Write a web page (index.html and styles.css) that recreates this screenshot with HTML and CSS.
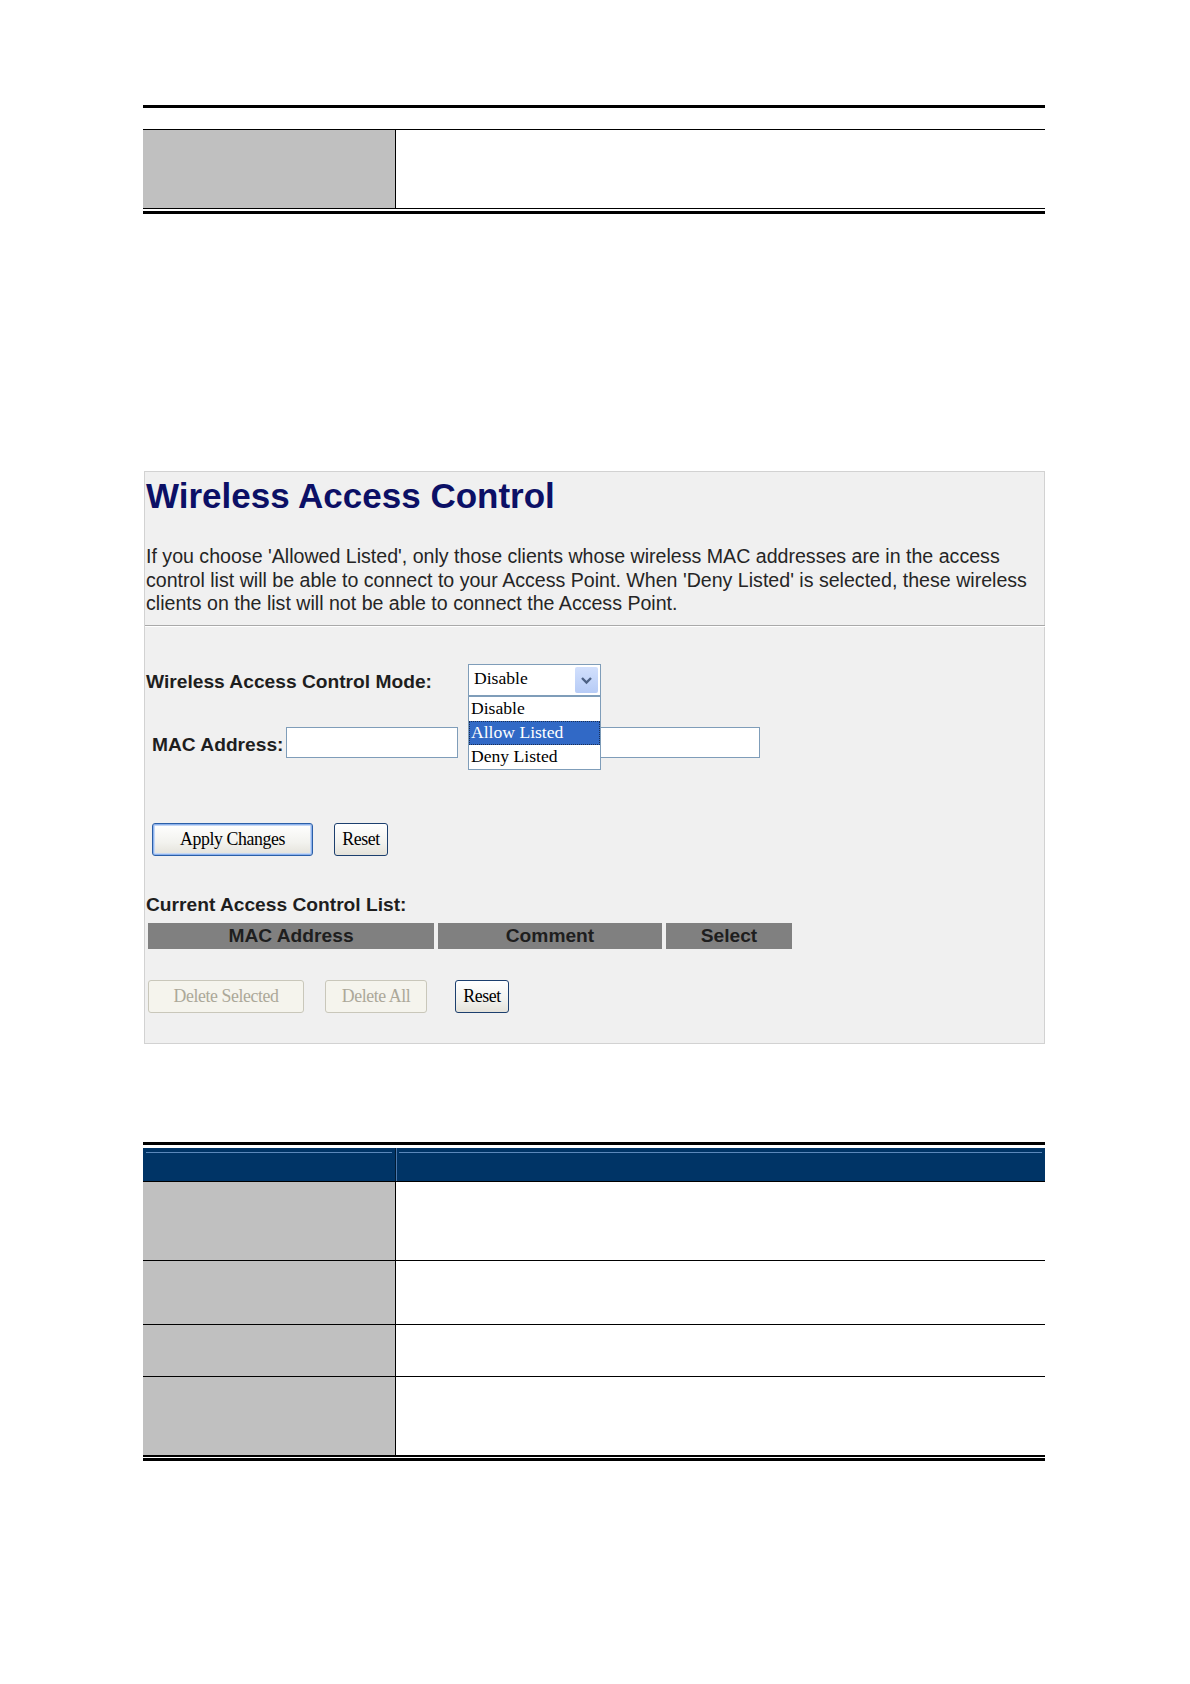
FILE: index.html
```html
<!DOCTYPE html>
<html lang="en">

<head>
    <meta charset="UTF-8">
    <title>Wireless Access Control</title>
    <link rel="stylesheet" href="styles.css">
</head>

<body>
    <div class="page">
        <div class="rule-thick"></div>

        <div class="param-table first">
            <div class="param-row tall">
                <div class="param-name"></div>
                <div class="param-desc"></div>
            </div>
        </div>
        <div class="rule-end"></div>

        <div class="panel">
            <h1>Wireless Access Control</h1>
            <p class="intro">If you choose 'Allowed Listed', only those clients whose wireless MAC addresses are in the access
                control list will be able to connect to your Access Point. When 'Deny Listed' is selected, these wireless
                clients on the list will not be able to connect the Access Point.</p>
            <div class="divider"></div>

            <div class="mode-row">
                <label class="field-label">Wireless Access Control Mode:</label>
                <div class="select">
                    <span class="select-value">Disable</span>
                    <span class="select-arrow">
                        <svg width="23" height="26" viewBox="0 0 23 26">
                            <path d="M7 11 L11.5 15.5 L16 11" fill="none" stroke="#4d6185" stroke-width="2.4" />
                        </svg>
                    </span>
                    <ul class="select-list">
                        <li>Disable</li>
                        <li class="active">Allow Listed</li>
                        <li>Deny Listed</li>
                    </ul>
                </div>
            </div>

            <div class="mac-row">
                <label class="field-label">MAC Address:</label>
                <input type="text" class="text-input mac-input">
                <input type="text" class="text-input comment-input">
            </div>

            <div class="btn-row apply-row">
                <button class="btn default">Apply Changes</button>
                <button class="btn">Reset</button>
            </div>

            <div class="list-title">Current Access Control List:</div>
            <div class="acl-head">
                <div class="acl-cell c-mac">MAC Address</div>
                <div class="acl-cell c-comment">Comment</div>
                <div class="acl-cell c-select">Select</div>
            </div>

            <div class="btn-row delete-row">
                <button class="btn disabled del-sel" disabled>Delete Selected</button>
                <button class="btn disabled del-all" disabled>Delete All</button>
                <button class="btn">Reset</button>
            </div>
        </div>

        <div class="rule-thick bottom-start"></div>
        <div class="param-table second">
            <div class="param-head">
                <div class="head-cell name"></div>
                <div class="head-cell desc"></div>
            </div>
            <div class="param-row tall">
                <div class="param-name"></div>
                <div class="param-desc"></div>
            </div>
            <div class="param-row mid">
                <div class="param-name"></div>
                <div class="param-desc"></div>
            </div>
            <div class="param-row short">
                <div class="param-name"></div>
                <div class="param-desc"></div>
            </div>
            <div class="param-row tall last">
                <div class="param-name"></div>
                <div class="param-desc"></div>
            </div>
        </div>
        <div class="rule-end"></div>
    </div>
</body>

</html>
```

FILE: styles.css
```css
body {
    margin: 0;
    background: #fff;
    font-family: "Liberation Sans", Arial, sans-serif;
    color: #1c1c1c;
}

.page {
    width: 902px;
    margin-left: 143px;
    padding-top: 105px;
    padding-bottom: 100px;
}

.rule-thick {
    height: 3px;
    background: #000;
}

/* parameter tables */
.param-table.first {
    margin-top: 21px;
    border-top: 1px solid #000;
}

.param-row {
    display: flex;
    border-bottom: 1px solid #000;
}

.param-row.tall {
    height: 78px;
}

.param-row.mid {
    height: 63px;
}

.param-row.short {
    height: 51px;
}

.param-row.last {
    border-bottom-width: 2px;
    height: 78px;
}

.param-name {
    width: 252px;
    background: #c0c0c0;
    border-right: 1px solid #000;
}

.param-desc {
    flex: 1;
}

.rule-end {
    margin-top: 2px;
    height: 3px;
    background: #000;
}

.second + .rule-end {
    margin-top: 1px;
}

.bottom-start {
    margin-top: 98px;
}

.param-table.second {
    padding-top: 3px;
}

.param-head {
    display: flex;
    height: 33px;
    background: #003466;
    border-bottom: 1px solid #000;
}

.head-cell::before {
    content: "";
    display: block;
    height: 1px;
    margin: 4px 3px 0;
    background: #5b88bb;
}

.head-cell.name {
    width: 252px;
    border-right: 1px solid #001a33;
    box-shadow: 1px 0 0 #4a78ad;
}

.head-cell.desc {
    flex: 1;
}

/* screenshot panel */
.panel {
    margin-top: 257px;
    margin-left: 1px;
    background: #f0f0f0;
    border: 1px solid #d2d2d2;
    padding: 4px 0 30px 1px;
}

h1 {
    margin: 0;
    font-size: 35px;
    line-height: 40px;
    font-weight: bold;
    color: #0c1066;
}

.intro {
    margin: 29px 0 0;
    font-size: 19.6px;
    line-height: 23.6px;
    color: #252525;
}

.divider {
    margin: 9px -1px 0 -1px;
    border-top: 1px solid #a9a9a9;
    border-bottom: 1px solid #fff;
}

.field-label {
    font-size: 19.2px;
    font-weight: bold;
    color: #1e1e1e;
}

.mode-row {
    display: flex;
    align-items: center;
    margin-top: 37px;
    height: 32px;
}

.mode-row .field-label {
    width: 322px;
    padding-top: 4px;
}

.select {
    position: relative;
    width: 131px;
    height: 30px;
    border: 1px solid #7f9db9;
    background: #fff;
    font-family: "Liberation Serif", "Times New Roman", serif;
    font-size: 17.6px;
    color: #000;
}

.select-value {
    position: absolute;
    left: 5px;
    top: 3px;
}

.select-arrow {
    position: absolute;
    right: 2px;
    top: 2px;
    width: 23px;
    height: 26px;
    border-radius: 2px;
    background: linear-gradient(#d2e0fd, #b6cbf6);
}

.select-arrow svg {
    display: block;
}

.select-list {
    position: absolute;
    left: -1px;
    top: 31px;
    width: 131px;
    margin: 0;
    padding: 0;
    list-style: none;
    border: 1px solid #7f9db9;
    background: #fff;
    z-index: 2;
}

.select-list li {
    height: 24px;
    line-height: 22px;
    padding-left: 2px;
}

.select-list li.active {
    background: #3169c6;
    color: #fff;
    outline: 1px dotted #1a2f55;
    outline-offset: -1px;
}

.mac-row {
    display: flex;
    align-items: center;
    margin-top: 31px;
    height: 31px;
    padding-left: 6px;
}

.mac-row .field-label {
    padding-top: 6px;
}

.text-input {
    box-sizing: border-box;
    height: 31px;
    border: 1px solid #7f9db9;
    background: #fff;
    margin: 0;
    padding: 0;
}

.mac-input {
    width: 172px;
    margin-left: 3px;
}

.comment-input {
    width: 172px;
    margin-left: 130px;
}

/* buttons */
.btn-row {
    display: flex;
}

.apply-row {
    margin-top: 65px;
    padding-left: 6px;
    gap: 21px;
}

.btn {
    height: 33px;
    padding: 0;
    border: 1px solid #1c3f6e;
    border-radius: 3px;
    background: linear-gradient(#ffffff, #f2f2ee 60%, #e4e2da);
    font-family: "Liberation Serif", "Times New Roman", serif;
    font-size: 17.8px;
    letter-spacing: -0.4px;
    color: #000;
    width: 54px;
}

.btn.default {
    width: 161px;
    border-color: #2b5fa8;
    box-shadow: inset 0 0 0 1px #8db2ec, inset 0 0 0 2px #c4d7f5;
}

.btn.disabled {
    border-color: #c9c7ba;
    background: #f5f4ed;
    color: #aca899;
}

.del-sel {
    width: 156px;
}

.del-all {
    width: 102px;
}

.list-title {
    margin-top: 37px;
    font-size: 19.2px;
    line-height: 23px;
    font-weight: bold;
    color: #1e1e1e;
}

.acl-head {
    display: flex;
    gap: 4px;
    margin-top: 7px;
    margin-left: 2px;
}

.acl-cell {
    height: 26px;
    line-height: 26px;
    background: #808080;
    text-align: center;
    font-size: 19.2px;
    font-weight: bold;
    color: #1e1e1e;
}

.c-mac {
    width: 286px;
}

.c-comment {
    width: 224px;
}

.c-select {
    width: 126px;
}

.delete-row {
    margin-top: 31px;
    padding-left: 2px;
}

.delete-row .del-all {
    margin-left: 21px;
}

.delete-row .btn:last-child {
    margin-left: 28px;
}
```
